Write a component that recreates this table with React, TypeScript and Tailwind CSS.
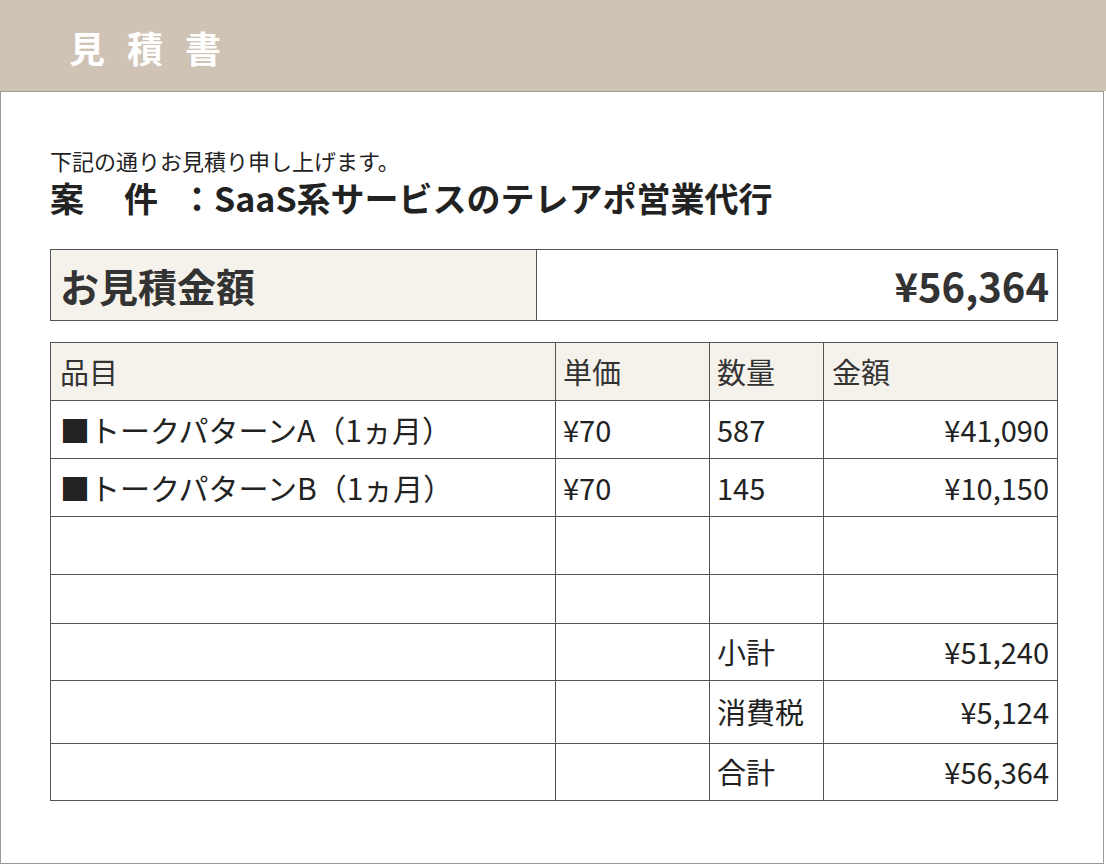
const rows = [
  { name: "■トークパターンA（1ヵ月）", price: "¥70", qty: "587", amount: "¥41,090", h: "h-[58px]" },
  { name: "■トークパターンB（1ヵ月）", price: "¥70", qty: "145", amount: "¥10,150", h: "h-[58px]" },
  { name: "", price: "", qty: "", amount: "", h: "h-[58px]" },
  { name: "", price: "", qty: "", amount: "", h: "h-[49px]" },
  { name: "", price: "", qty: "小計", amount: "¥51,240", h: "h-[57px]" },
  { name: "", price: "", qty: "消費税", amount: "¥5,124", h: "h-[63px]" },
  { name: "", price: "", qty: "合計", amount: "¥56,364", h: "h-[57px]" },
];

export default function App() {
  return (
    <div className="w-[1106px] h-[865px] bg-white font-['Noto_Sans_CJK_JP',sans-serif] text-[#222]">
      <div className="h-[91px] bg-[#cfc3b5] flex items-center pl-[69px] pt-[3px]">
        <h1 className="text-[36px] leading-none font-bold text-white tracking-[22px]">見積書</h1>
      </div>

      <div className="w-[1104px] h-[773px] border border-[#999] pl-[49px] pr-[46px] pt-[57px]">
        <p className="text-[22px] leading-[22px]">下記の通りお見積り申し上げます。</p>
        <div className="mt-[10px] flex text-[34px] leading-[34px] font-bold text-[#222]">
          <span>案</span>
          <span className="ml-[40px]">件</span>
          <span className="ml-[22px]">：</span>
          <span>SaaS系サービスのテレアポ営業代行</span>
        </div>

        <div className="mt-[34px] h-[72px] w-[1008px] border border-[#555] flex">
          <div className="w-[486px] bg-[#f5f1eb] border-r border-[#555] flex items-center pl-[9px]">
            <span className="text-[39px] font-bold text-[#333]">お見積金額</span>
          </div>
          <div className="flex-1 flex items-center justify-end pr-[8px]">
            <span className="text-[40px] font-bold text-[#333]">¥56,364</span>
          </div>
        </div>

        <table className="mt-[21px] w-[1008px] border-collapse table-fixed text-[29px]">
          <colgroup>
            <col className="w-[505px]" />
            <col className="w-[154px]" />
            <col className="w-[114px]" />
            <col className="w-[234px]" />
          </colgroup>
          <thead>
            <tr className="h-[58px] bg-[#f5f1eb] text-[#333]">
              <th className="border border-[#555] font-normal text-left pl-[9px]">品目</th>
              <th className="border border-[#555] font-normal text-left pl-[7px]">単価</th>
              <th className="border border-[#555] font-normal text-left pl-[7px]">数量</th>
              <th className="border border-[#555] font-normal text-left pl-[8px]">金額</th>
            </tr>
          </thead>
          <tbody>
            {rows.map((r, i) => (
              <tr key={i} className={r.h}>
                <td className="border border-[#555] pl-[9px] whitespace-nowrap text-[30px]">{r.name}</td>
                <td className="border border-[#555] pl-[7px]">{r.price}</td>
                <td className="border border-[#555] pl-[7px]">{r.qty}</td>
                <td className="border border-[#555] pr-[8px] text-right">{r.amount}</td>
              </tr>
            ))}
          </tbody>
        </table>
      </div>
    </div>
  );
}
